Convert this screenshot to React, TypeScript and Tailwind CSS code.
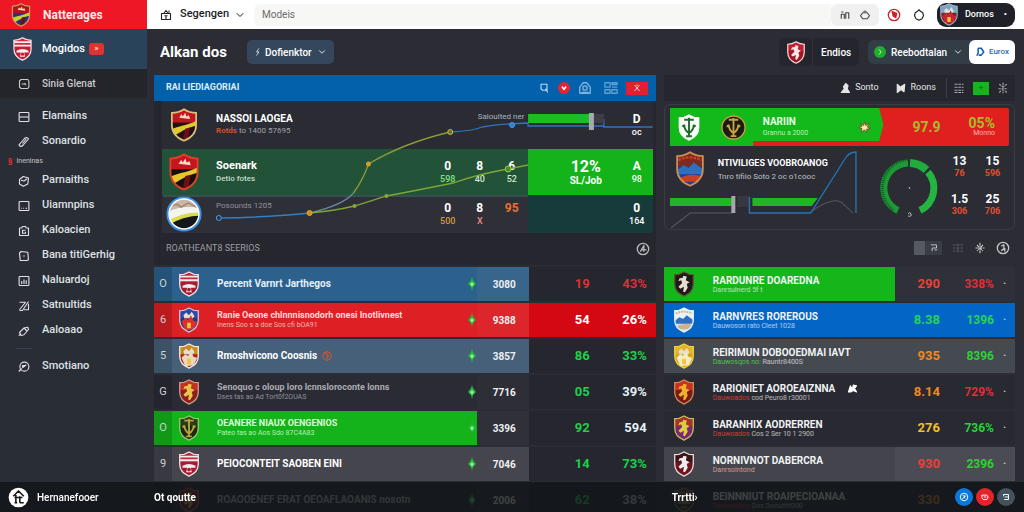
import { useId } from 'react'
import type { ReactNode } from 'react'
import { ChevronDown } from 'lucide-react'

type CrestKind = 'sash' | 'bands' | 'figure' | 'castle' | 'peak' | 'leaf' | 'horizon'

interface CrestProps {
  kind: CrestKind
  rim: string
  top: string
  base: string
  mark: string
  round?: boolean
  className?: string
}

const SHIELD = 'M12 1C9 3 5 4 2 4v10c0 7 5 11 10 13 5-2 10-6 10-13V4c-3 0-7-1-10-3Z'
const DISC = 'M12 2a12 12 0 0 1 0 24a12 12 0 0 1 0-24Z'

const Crest = ({ kind, rim, top, base, mark, round, className }: CrestProps) => {
  const id = useId()
  const outline = round ? DISC : SHIELD
  return (
    <svg viewBox={round ? '-1 1 26 26' : '0 0 24 28'} className={className} aria-hidden="true">
      <clipPath id={id}>
        <path d={outline} />
      </clipPath>
      <g clipPath={`url(#${id})`}>
        <rect x="-1" width="26" height="28" fill={base} />
        <rect x="-1" width="26" height="12" fill={top} />
        {kind === 'sash' && (
          <>
            <path d="M8 8l2-3 1 2 2-3 1 3 2-1 1 3Z" fill="#f3d9c4" />
            <path d="M-1 20C4 14 13 16 25 9v5C14 16 9 20-1 26Z" fill={mark} />
            <path d="M13 17l4-1-2 11h-4Z" fill="#6b1016" />
          </>
        )}
        {kind === 'horizon' && (
          <>
            <path d="M-1 13q12-6 26-3v5q-14-2-26 6Z" fill="#f4f4ee" />
            <path d="M3 8l4-1 3 2 5-3 6 3" stroke="#a5826c" fill="none" />
            <path d="M-1 20q12-8 26-7v2q-14 0-26 8Z" fill={mark} />
            <path d="M12 2.500a11 11 0 0 1 0 23a11 11 0 0 1 0-23Z" fill="none" stroke="#ffffff" strokeWidth="2.500" />
          </>
        )}
        {kind === 'bands' && (
          <>
            <path d="M0 6h24M0 10h24" stroke={mark} strokeWidth="2" />
            <path d="M5 16q7-4 14 0v2h-5l1 5h-6l1-5H5Z" fill={mark} />
            <circle cx="12" cy="20" r="2" fill={base} />
          </>
        )}
        {kind === 'figure' && (
          <path d="M11 5l4 1-1 4 4 2-3 2 1 4-3 5-2-1 1-5-4 2-2-2 4-4-1-3-3 1 1-3 4-1Z" fill={mark} />
        )}
        {kind === 'castle' && (
          <>
            <path d="M6 9l3-3 3 3 3-4 3 5-2 2H7Z" fill="#e7dccf" />
            <path d="M4 16l4-4 3 2 3-5 3 6 4 1-4 8-9 1Z" fill={mark} />
            <path d="M10 17h4v6h-4Z" fill="#f3c23a" />
          </>
        )}
        {kind === 'peak' && (
          <>
            <path d="M3 7q9-4 18 0" stroke={mark} strokeWidth="2" fill="none" strokeDasharray="2 1" />
            <path d="M1 16l6-5 4 2 4-4 8 6v3H1Z" fill="#2f6fc0" />
            <path d="M2 22q10-6 20-2v4H2Z" fill={mark} />
          </>
        )}
        {kind === 'leaf' && (
          <path
            d="M7 6h10M12 4v20M7 11c0 5 2 7 5 9 3-2 5-4 5-9M8 14l-3-2M16 14l3-2M9 23h6"
            stroke={mark}
            strokeWidth="2"
            fill="none"
          />
        )}
      </g>
      <path d={outline} fill="none" stroke={rim} strokeWidth="1.4" />
    </svg>
  )
}

const Glyph = ({ children, className = 'size-3' }: { children: ReactNode; className?: string }) => (
  <svg
    viewBox="0 0 16 16"
    className={className}
    fill="none"
    stroke="currentColor"
    strokeWidth="1.5"
    strokeLinejoin="round"
    aria-hidden="true"
  >
    {children}
  </svg>
)

const frame = <rect x="1.5" y="2" width="13" height="12" rx="1" />

const navTop = [
  { label: 'Elamains', icon: <>{frame}<path d="M2 8h12" /></> },
  { label: 'Sonardio', icon: <path d="M2 11l7-8q3-2 5 1l-7 8q-3 3-5 1-1-1 0-2Zm4-1l5-6" /> },
]

const navMain = [
  { label: 'Parnaiths', icon: <><path d="M2 6l5-4 7 2-1 8-6 3-5-3Z" /><path d="M4 7l4 1 4-3" /></> },
  { label: 'Uiamnpins', icon: <>{frame}<path d="M4 11h1M7 11h1M10 11h2" /></> },
  { label: 'Kaloacien', icon: <><path d="M2 4h3l1-2h4l1 2h3v10H2Z" /><path d="M10 7H6v4h4V9" /></> },
  { label: 'Bana titiGerhig', icon: <><path d="M2 4l2-2 9 1 1 10-2 1H3Z" /><path d="M7 8h2" /></> },
  { label: 'Naluardoj', icon: <>{frame}<path d="M5 12V8M8 12V6M11 12V7" /></> },
  { label: 'Satnultids', icon: <path d="M2 3h8L2 13M8 13h6V5M14 2L6 14H2" /> },
  { label: 'Aaloaao', icon: <><path d="M2 10l6-6 5-1 1 3-6 7-4 1Z" /><path d="M8 4l4 4M4 12l-3 2" /></> },
]

const NavLink = ({ label, icon }: { label: string; icon: ReactNode }) => (
  <a href="#" className="flex h-[25px] items-center gap-3 pl-[18px] text-[11px] font-medium text-[#dfe1e4]">
    <Glyph>{icon}</Glyph>
    {label}
  </a>
)

const Sidebar = () => (
  <aside className="flex w-[147px] shrink-0 flex-col bg-[#292d35]">
    <div className="flex h-[29px] items-center gap-[10px] bg-[#ee1725] pl-[9px]">
      <Crest kind="sash" rim="#c9a25c" top="#b3131d" base="#2d2f7a" mark="#c6d32c" className="h-6 w-6" />
      <span className="text-[12px] font-bold text-[#ffe9e6]">Natterages</span>
    </div>
    <nav>
      <a href="#" className="flex h-10 items-center bg-[#29435b] pl-3 text-[11px] font-medium text-white">
        <Crest kind="bands" rim="#f5e9ea" top="#d3273a" base="#c01f33" mark="#f7eef0" className="mr-[9px] h-6 w-[21px]" />
        Mogidos
        <span className="ml-1 flex h-3 w-[15px] items-center justify-center rounded-[3px] bg-[#e0322f] text-[8px]">»</span>
      </a>
      <a href="#" className="mb-[6px] flex h-[29px] items-center gap-3 bg-[#24242b] pl-[18px] text-[10px] font-medium text-[#c9cacd]">
        <Glyph>
          <path d="M4 2h9l1.500 2v8L13 14H4l-2-2V4ZM5 8h3l2-1M9 9h2" />
        </Glyph>
        Sinia Glenat
      </a>
      {navTop.map((item) => (
        <NavLink key={item.label} {...item} />
      ))}
      <p className="flex h-[14px] items-center gap-1 pl-2 text-[7px] text-[#c3c5c9]">
        <b className="text-[#e0322f]">§</b> Ineninas
      </p>
      {navMain.map((item) => (
        <NavLink key={item.label} {...item} />
      ))}
      <div className="mx-4 my-[5px] h-px w-4 bg-[#3a424d]" />
      <NavLink
        label="Smotiano"
        icon={<><circle cx="8.500" cy="7.500" r="6" /><path d="M1 14l4-4M6 9l5-4M6 9v-3h4" /></>}
      />
    </nav>
  </aside>
)

const Topbar = () => (
  <header className="flex h-[29px] shrink-0 items-center bg-white pr-[9px] pl-[13px] text-[#22232a]">
    <div className="flex items-center">
      <Glyph className="mr-2 size-3">
        <path d="M2 6h12v8H2ZM5 6l3-4 3 4M6 9h4M8 9v5M12 2v3" />
      </Glyph>
      <select aria-label="Section" className="appearance-none text-[11px] font-medium">
        <option>Segengen</option>
      </select>
      <ChevronDown className="ml-1 size-3" />
    </div>
    <input
      aria-label="Search"
      placeholder="Modeis"
      className="ml-2 h-[22px] min-w-0 flex-1 rounded-l-md bg-[#f7f7f6] px-2 text-[10px] outline-none placeholder:text-[#6b6b6b]"
    />
    <div className="flex h-[22px] items-center gap-2 rounded-md bg-[#f0f0f0] px-2 text-[#444]">
      <button aria-label="Library">
        <Glyph><path d="M3 13V7h4v6M9 13V5h4v8M3 4h3" /></Glyph>
      </button>
      <button aria-label="Alerts">
        <Glyph><path d="M5 5h6l3 4-3 4H5L2 9ZM6 3h4" /></Glyph>
      </button>
    </div>
    <button aria-label="Live" className="ml-2 text-[#c9252b]">
      <Glyph className="size-[14px]"><circle cx="8" cy="8" r="6.500" /><path d="M6 4l5 2-1 5-3-2Z" fill="currentColor" /></Glyph>
    </button>
    <button aria-label="Settings" className="mx-3">
      <Glyph><path d="M6 3l2-2 2 2 3 2 1 4-2 4-4 2-4-2-2-4 1-4Z" /></Glyph>
    </button>
    <button className="flex h-6 items-center rounded-[9px] bg-[#202128] pr-2 text-[9px] font-medium text-white">
      <Crest kind="castle" rim="#9fb0c0" top="#7fa3c6" base="#8d1a24" mark="#c52832" className="mr-1 h-[23px] w-6" />
      Dornos
      <span className="ml-[10px]">•</span>
    </button>
  </header>
)

const PageHeading = () => (
  <div className="flex h-[46px] items-center pl-[6px] text-white">
    <h1 className="w-[87px] text-[15px] font-bold">Alkan dos</h1>
    <div className="flex h-6 items-center rounded-[5px] bg-[#35475d] px-[7px]">
      <Glyph className="mr-[3px] size-2"><path d="M10 1L5 8h5l-5 7" /></Glyph>
      <select aria-label="Filter" className="appearance-none text-[10px] font-medium">
        <option>Dofienktor</option>
      </select>
      <ChevronDown className="ml-[5px] size-[10px]" />
    </div>
    <button className="ml-auto flex h-7 items-center rounded-md bg-[#24252d] text-[10px] font-medium">
      <span className="flex h-full w-[34px] items-center justify-center border-r border-[#30313a]">
        <Crest kind="figure" rim="#f4e9ea" top="#c21f2e" base="#a31624" mark="#f4e9ea" className="h-[23px] w-5" />
      </span>
      <span className="w-[46px] pl-2 text-left">Endios</span>
    </button>
    <div className="ml-[9px] flex h-6 items-center rounded-md bg-[#323d48]">
      <div className="flex items-center px-[6px]">
        <span className="mr-[5px] flex size-3 items-center justify-center rounded-full bg-[#1fae2c]">
          <Glyph className="size-2"><path d="M6 3l4 5-4 5" /></Glyph>
        </span>
        <select aria-label="Competition" className="appearance-none text-[10px] font-medium">
          <option>Reebodtalan</option>
        </select>
        <ChevronDown className="ml-[5px] size-[10px]" />
      </div>
      <button className="flex h-full w-[46px] items-center justify-center gap-1 rounded-md bg-white text-[8px] font-medium text-[#2f6f9f]">
        <Glyph className="size-[10px] text-[#0e62b4]"><path d="M5 2h5l4 6-4 5H6M5 2v8l-2 4" strokeWidth="2.500" /></Glyph>
        Eurox
      </button>
    </div>
  </div>
)

const Stat = ({ value, sub, tone = 'text-white' }: { value: string; sub: string; tone?: string }) => (
  <div className="w-8 text-center">
    <div className="text-[12px] leading-[15px] font-bold text-white">{value}</div>
    <div className={`text-[9px] leading-[11px] font-medium ${tone}`}>{sub}</div>
  </div>
)

const FormChart = () => (
  <svg viewBox="0 0 503 132" preserveAspectRatio="none" className="pointer-events-none absolute inset-0 size-full" fill="none" aria-hidden="true">
    <path d="M9 95h366" stroke="#3f7068" />
    <path d="M65 117Q120 116 156 112" stroke="#2f80c9" strokeWidth="1.500" />
    <path d="M156 112Q190 104 200 92" stroke="#6688a0" strokeWidth="1.200" />
    <path d="M200 92Q210 78 215 63Q250 42 297 31" stroke="#8d9a3f" strokeWidth="1.300" />
    <path d="M297 31Q320 30 329 26Q345 23 375 22V25H451V18V26H500" stroke="#2f74bd" strokeWidth="1.300" />
    <path d="M156 112Q180 110 201 105L233 95Q260 90 300 82Q325 73 355 68L375 64" stroke="#7fa636" strokeWidth="1.300" />
    <rect x="375" y="13" width="64" height="9" fill="#1fbb25" />
    <rect x="441" y="13" width="10" height="9" fill="#3d3e46" />
    <rect x="436" y="12" width="5" height="17" fill="#a7a9ad" />
    <circle cx="65" cy="117" r="2.500" fill="#2b2f3a" stroke="#4aa1e8" />
    <circle cx="156" cy="112" r="2.500" fill="#c98b22" stroke="#e6a52e" />
    <circle cx="215" cy="63" r="2" fill="#d19a26" stroke="#e1a630" />
    <circle cx="297" cy="31" r="2.500" fill="#6b7030" stroke="#c7bf3a" />
    <circle cx="359" cy="24" r="2.500" fill="#2d7fd8" stroke="#4c98e8" />
    <circle cx="201" cy="105" r="2" fill="#8aa83a" />
    <circle cx="233" cy="95" r="2" fill="#8aa83a" />
    <circle cx="355" cy="68" r="3" fill="#4d8a2c" stroke="#98cf3e" />
  </svg>
)

const FormPanel = () => (
  <section className="bg-[#25262e]">
    <div className="flex h-[26px] items-center gap-2 bg-[#0361ab] pr-2 pl-3 text-[#b9dcf5]">
      <h2 className="mr-auto text-[9px] font-bold text-[#dcedf8]">RAI LIEDIAGORIAI</h2>
      <button aria-label="Find"><Glyph><path d="M4 3h8v8H6L4 9ZM10 9l3 5" /></Glyph></button>
      <button aria-label="Pin" className="flex size-3 items-center justify-center rounded-full bg-[#e22531] text-white">
        <Glyph className="size-2"><path d="M4 5l4 6 4-6" strokeWidth="3" /></Glyph>
      </button>
      <button aria-label="Team" className="text-[#7fb4dc]">
        <Glyph className="size-[14px]"><path d="M2 14V7l4-5h4l4 5v7Z" /><circle cx="8" cy="8" r="2.500" /><path d="M4 13h8" /></Glyph>
      </button>
      <button aria-label="Grid" className="ml-1 text-[#5f9fd2]">
        <Glyph className="size-[14px]"><path d="M1 2h6v5H1ZM9 2h6v2H9ZM9 7h6M1 10h6v4H1ZM9 10h6v4H9Z" /></Glyph>
      </button>
      <button aria-label="Close" className="flex h-[13px] w-[22px] items-center justify-center bg-[#e3202e] text-white">
        <Glyph className="size-2"><path d="M3 2l10 12M13 2L3 14M8 1v3" /></Glyph>
      </button>
    </div>
    <div className="relative pr-[3px] pl-2">
      <div className="flex h-12 items-center bg-[#2a2b33]">
        <Crest kind="sash" rim="#d9c07c" top="#c3161f" base="#241014" mark="#e3c82a" className="mr-[15px] ml-[5px] h-[34px] w-[34px]" />
        <div className="flex-1">
          <div className="text-[10px] leading-3 font-bold text-white">NASSOI LAOGEA</div>
          <div className="text-[8px] leading-3 text-[#a4a6ab]">
            <b className="text-[#d5502b]">Rotds</b> to 1400 57695
          </div>
        </div>
        <div className="w-[50px] self-start pt-[10px] text-[8px] whitespace-nowrap text-[#a9b4c0]">Saloulted ner</div>
        <div className="flex w-[125px] justify-end">
          <Stat value="D" sub="oc" />
        </div>
      </div>
      <div className="flex h-[46px] bg-[#225237]">
        <div className="flex flex-1 items-center">
          <Crest kind="sash" rim="#e0402c" top="#c3161f" base="#17100f" mark="#e3c82a" className="mr-[15px] ml-[5px] h-[38px] w-[34px]" />
          <div className="flex-1">
            <div className="text-[11px] leading-[14px] font-bold text-white">Soenark</div>
            <div className="text-[8px] leading-3 font-medium text-[#c3dccb]">Detio fotes</div>
          </div>
          <Stat value="0" sub="598" tone="text-[#7fe07f]" />
          <Stat value="8" sub="40" tone="text-[#cfe8cf]" />
          <Stat value="6" sub="52" tone="text-[#cfe8cf]" />
        </div>
        <div className="flex w-[125px] items-center justify-end bg-[#13b31a] text-white">
          <div className="mr-1 w-[62px] text-center">
            <div className="text-[16px] leading-[17px] font-bold">12%</div>
            <div className="text-[10px] leading-3 font-bold">SL/Job</div>
          </div>
          <Stat value="A" sub="98" />
        </div>
      </div>
      <div className="flex h-[38px] bg-[#2f2f37]">
        <div className="flex flex-1 items-center">
          <Crest round kind="horizon" rim="#3d8fe0" top="#c7b7a4" base="#15171a" mark="#d7dc52" className="mr-[14px] ml-1 size-9" />
          <div className="flex-1 self-start pt-[5px] text-[8px] text-[#8f9197]">Posounds 1205</div>
          <Stat value="0" sub="500" tone="text-[#d59a3c]" />
          <Stat value="8" sub="X" tone="text-[#e58c80]" />
          <div className="w-8 self-start pt-1 text-center text-[12px] font-bold text-[#e8722f]">95</div>
        </div>
        <div className="flex w-[125px] items-center justify-end bg-[#173a3a]">
          <Stat value="0" sub="164" />
        </div>
      </div>
      <FormChart />
    </div>
    <div className="flex h-8 items-center justify-between pr-[6px] pl-3">
      <h3 className="text-[9px] text-[#9b9da3]">ROATHEANT8 SEERIOS</h3>
      <button aria-label="Ranking" className="text-[#b7b9be]">
        <Glyph className="size-[14px]"><circle cx="8" cy="8" r="6.500" /><path d="M5 11l4-7v7M7 9h5" /></Glyph>
      </button>
    </div>
  </section>
)

const Gauge = () => (
  <svg viewBox="0 0 64 64" className="mr-[2px] ml-auto size-16" fill="none" role="img" aria-label="Form gauge">
    <path d="M21 54.500A25 25 0 0 1 31 7" stroke="#1d9a36" strokeWidth="7" />
    <path d="M16 54A28.500 28.500 0 0 1 31 3.500" stroke="#14522b" strokeWidth="2.500" strokeDasharray="1 1" />
    <path d="M33 7A25 25 0 0 1 49.500 14" stroke="#21ab3c" strokeWidth="8" />
    <path d="M51 16A25 25 0 0 1 43 54.500" stroke="#23b53f" strokeWidth="7" />
    <path d="M32 31l1 2M31 58q2-3 3 0t-3 2" stroke="#b9bcc1" />
  </svg>
)

const DuelChart = () => (
  <svg viewBox="0 0 189 84" preserveAspectRatio="none" className="pointer-events-none absolute inset-0 size-full" fill="none" aria-hidden="true">
    <path d="M1 82L20 67H62M140 66Q160 51 170 56L182 67" stroke="#555861" />
    <rect y="52" width="64" height="8" fill="#22b52a" />
    <rect x="67" y="50" width="12" height="11" fill="#363740" />
    <path d="M82 52h65l-6 8H82Z" fill="#22b52a" />
    <rect x="61" y="50" width="4" height="17" fill="#a5a7ab" />
    <path d="M79 51V67H140L174 13Q178 6 185 6V67" stroke="#2376b5" strokeWidth="1.300" />
  </svg>
)

const duelStats = [
  { value: '13', sub: '76' },
  { value: '15', sub: '596' },
  { value: '1.5', sub: '306' },
  { value: '25', sub: '706' },
]

const DuelPanel = () => (
  <section>
    <div className="flex h-[26px] items-center justify-end bg-[#25262e] pr-[6px] text-[9px] text-[#e3e4e6]">
      <button className="mr-4 flex items-center gap-1">
        <Glyph><path d="M3 14l4-5-1-3 3-4 3 3-1 4 3 5Z" fill="currentColor" /></Glyph>
        Sonto
      </button>
      <button className="mr-[10px] flex items-center gap-1">
        <Glyph><path d="M3 3l4 4 6-4-1 10-4-3-5 4Z" fill="currentColor" /></Glyph>
        Roons
      </button>
      <div className="flex h-5 items-center gap-2 border-l border-[#3a3b44] pl-[6px] text-[#a9abb0]">
        <button aria-label="Table"><Glyph><path d="M2 3h12M2 7h12M2 11h12M2 14h12" strokeDasharray="4 1" /></Glyph></button>
        <button aria-label="Add" className="flex h-[13px] w-4 items-center justify-center bg-[#17b41e] text-[8px] text-[#0b5a12]">+</button>
        <button aria-label="Options"><Glyph><path d="M3 3l4 3M13 3L9 6M8 1v14M2 9h12M3 14l3-3M13 14l-3-3" strokeDasharray="3 1" /></Glyph></button>
      </div>
    </div>
    <div className="mt-[3px] h-[126px] rounded-md border border-[#3a3c45] px-[5px] py-[3px]">
      <div className="flex h-[38px] items-center rounded-[2px] bg-[#e0201f]">
        <div className="flex h-full w-[63%] items-center bg-[#13b81a] [clip-path:polygon(0_0,98%_0,100%_44%,98%_87%,39%_87%,39%_100%,0_100%)]">
          <Crest kind="leaf" rim="#ffffff" top="#f7fff7" base="#f7fff7" mark="#216a2b" className="ml-[7px] h-[27px] w-6" />
          <Crest round kind="leaf" rim="#c7a23d" top="#1b1b14" base="#1b1b14" mark="#c7a23d" className="ml-5 size-[25px]" />
          <div className="ml-[17px] flex-1">
            <div className="text-[10px] leading-3 font-bold text-[#e2ffe2]">NARIIN</div>
            <div className="text-[7px] leading-[10px] text-[#b6f2b6]">Grannu a 2000</div>
          </div>
          <Glyph className="mr-3 size-3 text-[#8a3a12]">
            <path d="M8 1l1 5 5-3-3 5 4 2-5 1 1 4-4-3-4 3 1-5-4-1 4-2-2-4 4 3Z" fill="#f6e6b8" strokeWidth="1" />
          </Glyph>
        </div>
        <div className="flex flex-1 items-center justify-end pr-[14px] font-bold text-[#a9bd2c]">
          <span className="mr-7 text-[14px]">97.9</span>
          <span className="text-right text-[14px] leading-3">
            05%
            <span className="block text-[7px] leading-[8px] font-normal text-[#ffb3a8]">Monno</span>
          </span>
        </div>
      </div>
      <div className="flex h-[80px]">
        <div className="relative h-[84px] w-[56%]">
          <DuelChart />
          <div className="relative flex items-center pt-[5px]">
            <Crest kind="peak" rim="#c98f55" top="#7c2a22" base="#1b3fa0" mark="#c8401f" className="mr-3 ml-1 h-9 w-8" />
            <div className="whitespace-nowrap">
              <div className="text-[9px] leading-[14px] font-bold text-white">NTIVILIGES VOOBROANOG</div>
              <div className="text-[8px] leading-[13px] text-[#bfc1c6]">Tnro tifiio Soto 2 oc o1cooc</div>
            </div>
          </div>
        </div>
        <div className="flex flex-1 items-center pt-1">
          <Gauge />
        </div>
        <dl className="grid w-[66px] grid-cols-2 content-center gap-y-[14px]">
          {duelStats.map((s) => (
            <div key={s.sub} className="text-center leading-3 font-bold">
              <dt className="text-[12px] text-white">{s.value}</dt>
              <dd className="text-[9px] text-[#e4502f]">{s.sub}</dd>
            </div>
          ))}
        </dl>
      </div>
    </div>
    <div className="flex h-[35px] items-center justify-end gap-[10px] pr-[5px] text-[#c4c6ca]">
      <button aria-label="Toggle view" className="flex h-[14px] w-7 rounded-[1px] bg-[#3a3d45]">
        <span className="h-full w-[11px] bg-[#565962]" />
        <Glyph className="m-auto size-[10px]"><path d="M3 3h9v5H5v5M9 11h4" /></Glyph>
      </button>
      <button aria-label="Rows" className="text-[#54575f]"><Glyph><path d="M1 4h14M1 8h14M1 12h14M8 2v12" strokeDasharray="4 1" /></Glyph></button>
      <button aria-label="Split"><Glyph><path d="M8 1v14M2 8h12M4 4l8 8M12 4l-8 8" strokeDasharray="4 1" /></Glyph></button>
      <button aria-label="History"><Glyph className="size-[14px]"><circle cx="8" cy="8" r="6.500" /><path d="M9 4v5l-3 2M9 4L6 6M10 8v4" /></Glyph></button>
    </div>
  </section>
)

interface TeamRow {
  rank: string
  name: string
  sub?: string
  points: string
  a: string
  b: string
  crest: CrestProps
  rowBg: string
  pointsBg: string
  tailBg: string
  nameTone: string
  aTone: string
  bTone: string
  award?: boolean
}

const GREEN = 'text-[#1fd04a]'
const RED = 'text-[#dc3136]'
const TAIL = 'bg-[#25262e]'

const arsenal: CrestProps = { kind: 'bands', rim: '#f1e3e5', top: '#b92a3d', base: '#a31c30', mark: '#f4e9eb' }

const teams: TeamRow[] = [
  { rank: 'O', name: 'Percent Varnrt Jarthegos', points: '3080', a: '19', b: '43%', crest: arsenal, rowBg: 'bg-[#2c618e]', pointsBg: 'bg-[#38658c]', tailBg: TAIL, nameTone: 'text-[#e2f0fa]', aTone: RED, bTone: RED },
  { rank: '6', name: 'Ranie Oeone chlnnnisnodorh onesi Inotlivnest', sub: 'Inens Soo s a doe Sos cfi bOA91', points: '9388', a: '54', b: '26%', crest: { kind: 'castle', rim: '#c9c3d6', top: '#2b4aa8', base: '#2c3478', mark: '#d8322f' }, rowBg: 'bg-[#dd2024]', pointsBg: 'bg-[#dd262b]', tailBg: 'bg-[#d30813]', nameTone: 'text-[#ffd9d6]', aTone: 'text-white', bTone: 'text-white' },
  { rank: '5', name: 'Rmoshvicono Coosnis', points: '3857', a: '86', b: '33%', crest: { kind: 'castle', rim: '#f5efe5', top: '#c98a1f', base: '#b3261e', mark: '#e8d8c0' }, rowBg: 'bg-[#456078]', pointsBg: 'bg-[#456078]', tailBg: TAIL, nameTone: 'text-white', aTone: GREEN, bTone: GREEN, award: true },
  { rank: 'G', name: 'Senoquo c oloup loro lcnnsloroconte lonns', sub: 'Dses tas ao Ad Tort0f2OUAS', points: '7716', a: '05', b: '39%', crest: { kind: 'figure', rim: '#c9a08a', top: '#c33024', base: '#8f1f1f', mark: '#e8c64a' }, rowBg: 'bg-[#2a2b34]', pointsBg: 'bg-[#2d2e36]', tailBg: TAIL, nameTone: 'text-[#a9abb1]', aTone: GREEN, bTone: 'text-[#e4f1fa]' },
  { rank: 'O', name: 'OEANERE NIAUX OENGENIOS', sub: 'Pateo tas ao Aos Sdo 87C4A83', points: '3396', a: '92', b: '594', crest: { kind: 'leaf', rim: '#9ac76a', top: '#2a3a1c', base: '#1d2914', mark: '#b7a43a' }, rowBg: 'bg-[#15b31b]', pointsBg: 'bg-[#303038]', tailBg: TAIL, nameTone: 'text-[#d9ffd6]', aTone: GREEN, bTone: 'text-[#e4f1fa]' },
  { rank: '9', name: 'PEIOCONTEIT SAOBEN EINI', points: '7046', a: '14', b: '73%', crest: arsenal, rowBg: 'bg-[#44454d]', pointsBg: 'bg-[#44454d]', tailBg: TAIL, nameTone: 'text-white', aTone: GREEN, bTone: GREEN },
  { rank: '', name: 'ROAOOENEF ERAT OEOAFLAOANIS nosotn', points: '2006', a: '62', b: '38%', crest: { kind: 'figure', rim: '#a06a5a', top: '#8c2a24', base: '#6a1d1d', mark: '#c3a44a' }, rowBg: 'bg-[#2a2b34]', pointsBg: 'bg-[#2d2e36]', tailBg: TAIL, nameTone: 'text-[#b9bbc1]', aTone: GREEN, bTone: 'text-[#b5c3d0]' },
]

const TeamTable = () => (
  <table className="w-full table-fixed border-separate border-spacing-x-0 border-spacing-y-[2px]">
    <colgroup>
      <col className="w-[18px]" />
      <col className="w-[45px]" />
      <col />
      <col className="w-[52px]" />
      <col className="w-[61px]" />
      <col className="w-[66px]" />
    </colgroup>
    <tbody>
      {teams.map((t) => (
        <tr key={t.name} className="h-[34px]">
          <td className={`p-0 ${t.rowBg}`}>
            <div className="flex h-[34px] items-center justify-center bg-black/15 text-[11px] text-[#cdd2d8]">{t.rank}</div>
          </td>
          <td className={`p-0 ${t.rowBg}`}>
            <Crest {...t.crest} className="ml-[5px] h-[26px] w-6" />
          </td>
          <td className={`p-0 ${t.rowBg}`}>
            <div className="flex items-center">
              <div className={`min-w-0 flex-1 whitespace-nowrap ${t.nameTone}`}>
                <div className={`flex items-center gap-1 ${t.sub ? 'text-[9px] leading-[11px] font-bold' : 'text-[10px] leading-3 font-bold'}`}>
                  {t.name}
                  {t.award && (
                    <Glyph className="size-3 text-[#d9552b]"><circle cx="8" cy="8" r="5.500" /><path d="M5 3l5 5-3 3" /></Glyph>
                  )}
                </div>
                {t.sub && <div className="text-[7px] leading-[9px] opacity-80">{t.sub}</div>}
              </div>
              <svg viewBox="0 0 8 14" className="h-[14px] w-[10px]" aria-hidden="true">
                <path d="M4 0l1 3 3 4-3 3-1 4-1-4-3-3 3-4Z" fill="#23b83a" />
                <path d="M4 5l2 2-2 3-2-3Z" fill="#8ff09a" />
              </svg>
            </div>
          </td>
          <td className={`p-0 pl-4 text-[10px] font-bold text-[#eef1f4] ${t.pointsBg}`}>{t.points}</td>
          <td className={`p-0 text-right text-[13px] font-bold ${t.tailBg} ${t.aTone}`}>{t.a}</td>
          <td className={`p-0 pr-[9px] text-right text-[13px] font-bold ${t.tailBg} ${t.bTone}`}>{t.b}</td>
        </tr>
      ))}
    </tbody>
  </table>
)

interface RivalRow {
  name: string
  lead?: string
  sub: string
  score: string
  pct: string
  crest: CrestProps
  rowBg: string
  tailBg: string
  leadTone: string
  scoreTone: string
  pctTone: string
  badge?: boolean
}

const ORANGE = 'text-[#ee8a1e]'

const rivals: RivalRow[] = [
  { name: 'RARDUNRE DOAREDNA', sub: 'Danrsuinerd 5f t', score: '290', pct: '338%', crest: { kind: 'figure', rim: '#5d5233', top: '#1e1a17', base: '#1e1a17', mark: '#e6dcd0' }, rowBg: 'bg-[#14b61a]', tailBg: 'bg-[#303038]', leadTone: '', scoreTone: 'text-[#ea4036]', pctTone: RED },
  { name: 'RARNVRES ROREROUS', sub: 'Dauwoson rato Cleet 1028', score: '8.38', pct: '1396', crest: { kind: 'peak', rim: '#e8f2fb', top: '#e8f2fb', base: '#cfe0ee', mark: '#c9b48c' }, rowBg: 'bg-[#0365c6]', tailBg: 'bg-[#0365c6]', leadTone: '', scoreTone: 'text-[#25d35a]', pctTone: 'text-[#25d35a]' },
  { name: 'REIRIMUN DOBOOEDMAI IAVT', lead: 'Dauwosqos no:', sub: 'Rauntr8400S', score: '935', pct: '8396', crest: { kind: 'castle', rim: '#f2d34a', top: '#e3b51f', base: '#d9a514', mark: '#f3ecc9' }, rowBg: 'bg-[#454950]', tailBg: 'bg-[#454950]', leadTone: 'text-[#4ec24e]', scoreTone: ORANGE, pctTone: 'text-[#2fcf35]' },
  { name: 'RARIONIET AOROEAIZNNA', lead: 'Dauwoados', sub: 'cod Peuro8 r30001', score: '8.14', pct: '729%', crest: { kind: 'figure', rim: '#d18a5a', top: '#c8301f', base: '#7a1a14', mark: '#efb02e' }, rowBg: 'bg-[#282931]', tailBg: 'bg-[#282931]', leadTone: 'text-[#d33a34]', scoreTone: ORANGE, pctTone: RED, badge: true },
  { name: 'BARANHIX AODRERREN', lead: 'Dauwoados', sub: 'Cos 2 Ser 10 1 2900', score: '276', pct: '736%', crest: { kind: 'figure', rim: '#c3c05a', top: '#a8322c', base: '#7a2670', mark: '#d8cf3e' }, rowBg: 'bg-[#282931]', tailBg: 'bg-[#282931]', leadTone: 'text-[#d33a34]', scoreTone: 'text-[#efc02c]', pctTone: 'text-[#2fcf35]' },
  { name: 'NORNIVNOT DABERCRA', lead: 'Danrsointond', sub: '', score: '930', pct: '2396', crest: { kind: 'figure', rim: '#e9dcdc', top: '#3a1418', base: '#6d1420', mark: '#f2ecec' }, rowBg: 'bg-[#44454c]', tailBg: 'bg-[#4b4c53]', leadTone: 'text-[#d8988c]', scoreTone: 'text-[#ea4036]', pctTone: 'text-[#2fcf35]' },
  { name: 'BEINNNIUT ROAIPECIOANAA', lead: 'Dauwoados', sub: 'Gos Donutttt000', score: '330', pct: '', crest: { kind: 'bands', rim: '#8a7a5a', top: '#4a3a24', base: '#3a2a1a', mark: '#8a7a5a' }, rowBg: 'bg-[#282931]', tailBg: 'bg-[#282931]', leadTone: 'text-[#d33a34]', scoreTone: ORANGE, pctTone: RED },
]

const RivalTable = () => (
  <table className="w-full table-fixed border-separate border-spacing-x-0 border-spacing-y-[2px]">
    <colgroup>
      <col className="w-[49px]" />
      <col />
      <col className="w-[45px]" />
      <col className="w-[54px]" />
      <col className="w-[21px]" />
    </colgroup>
    <tbody>
      {rivals.map((r) => (
        <tr key={r.name} className="h-[34px]">
          <td className={`p-0 ${r.rowBg}`}>
            <Crest {...r.crest} className="ml-2 h-[26px] w-6" />
          </td>
          <td className={`p-0 pt-[2px] whitespace-nowrap ${r.rowBg}`}>
            <div className="flex items-center gap-3 text-[10px] leading-[11px] font-bold text-[#f0f3f5]">
              {r.name}
              {r.badge && (
                <Glyph className="size-[11px] text-white"><path d="M2 13l3-9 3 5 1-6 5 1-3 4 3 5-5-2-3 2Z" fill="currentColor" /></Glyph>
              )}
            </div>
            <div className="text-[7px] leading-[9px] text-white/65">
              {r.lead && <span className={r.leadTone}>{r.lead}</span>} {r.sub}
            </div>
          </td>
          <td className={`p-0 text-right text-[13px] font-bold ${r.tailBg} ${r.scoreTone}`}>{r.score}</td>
          <td className={`p-0 text-right text-[12px] font-bold ${r.tailBg} ${r.pctTone}`}>{r.pct}</td>
          <td className={`p-0 text-center text-[8px] text-[#c9ccd1] ${r.tailBg}`}>•</td>
        </tr>
      ))}
    </tbody>
  </table>
)

const BottomBar = () => (
  <footer className="fixed inset-x-0 bottom-0 flex h-[30px] items-center bg-[#101418]/80 text-white">
    <div className="flex h-full w-[154px] shrink-0 items-center gap-2 pl-2">
      <Glyph className="size-[21px] text-[#15171b]">
        <circle cx="8" cy="8" r="7.500" fill="#ffffff" stroke="none" />
        <path d="M4 7l4-4 4 4M6 6v6M5 8h6M9 7v5M5 12h2M9 12h3" strokeWidth="1.200" />
      </Glyph>
      <span className="text-[10px] font-medium">Hernanefooer</span>
    </div>
    <div className="grid flex-1 grid-cols-[10fr_7fr] gap-2 pr-[9px] text-[10px] font-bold">
      <span className="self-center">Ot qoutte</span>
      <div className="flex items-center gap-[3px] pl-2">
        <span className="mr-auto">Trrtti›</span>
        <button aria-label="Messages" className="flex size-[18px] items-center justify-center rounded-full bg-[#0878dc]">
          <Glyph className="size-[10px]"><circle cx="8" cy="8" r="6" /><path d="M5 11l6-5M6 6h3v4" /></Glyph>
        </button>
        <button aria-label="Record" className="flex size-[18px] items-center justify-center rounded-full bg-[#e1262a]">
          <Glyph className="size-[10px]"><path d="M3 5h8l2 3-2 4H5L3 9ZM6 8h4" /></Glyph>
        </button>
        <button aria-label="Help" className="flex size-[18px] items-center justify-center rounded-full bg-[#43525d]">
          <Glyph className="size-[10px]"><path d="M4 4h8v8H5M6 8h6M4 4v3" /></Glyph>
        </button>
      </div>
    </div>
  </footer>
)

export default function App() {
  return (
    <div className="flex h-screen overflow-hidden bg-[#2b2c34] font-['Roboto',sans-serif]">
      <Sidebar />
      <div className="flex min-w-0 flex-1 flex-col">
        <Topbar />
        <main className="min-h-0 flex-1 overflow-hidden pr-[9px] pl-[7px]">
          <PageHeading />
          <div className="grid grid-cols-[10fr_7fr] gap-2">
            <div className="min-w-0">
              <FormPanel />
              <TeamTable />
            </div>
            <div className="min-w-0">
              <DuelPanel />
              <RivalTable />
            </div>
          </div>
        </main>
      </div>
      <BottomBar />
    </div>
  )
}
